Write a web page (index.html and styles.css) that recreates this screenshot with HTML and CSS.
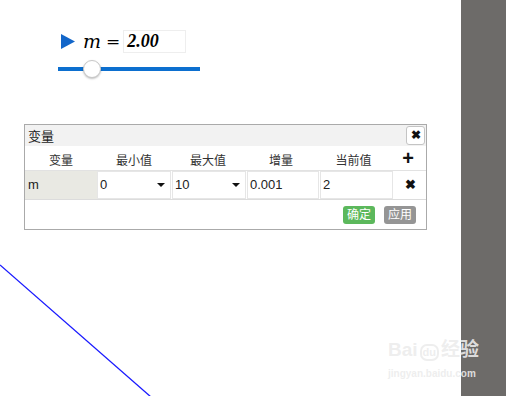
FILE: index.html
```html
<!DOCTYPE html>
<html lang="zh">
<head>
    <meta charset="UTF-8">
    <title>变量</title>
    <link rel="stylesheet" href="styles.css">
</head>
<body>
<div class="page">
    <div class="canvas">
        <svg class="graph" width="461" height="396" viewBox="0 0 461 396">
            <line x1="0" y1="265" x2="151" y2="397" stroke="#1a1aff" stroke-width="1.3"/>
        </svg>
        <div class="slider-box">
            <div class="slider-label">
                <svg class="play" width="14" height="15" viewBox="0 0 14 15"><polygon points="0,0 14,7.5 0,15" fill="#1266c9"/></svg>
                <span class="var-name">m</span>
                <span class="eq">=</span>
                <span class="val">2.00</span>
            </div>
            <div class="track">
                <div class="knob"></div>
            </div>
        </div>
        <div class="dialog">
            <div class="dlg-title">
                <span>变量</span>
                <button class="dlg-close">&#10006;</button>
            </div>
            <div class="row head">
                <div class="c1">变量</div>
                <div class="c2">最小值</div>
                <div class="c3">最大值</div>
                <div class="c4">增量</div>
                <div class="c5">当前值</div>
                <div class="c6 plus">+</div>
            </div>
            <div class="row body">
                <div class="c1 cell name">m</div>
                <div class="c2 cell sel">0<i class="caret"></i></div>
                <div class="c3 cell sel">10<i class="caret"></i></div>
                <div class="c4 cell">0.001</div>
                <div class="c5 cell">2</div>
                <div class="c6 del">&#10006;</div>
            </div>
            <div class="dlg-foot">
                <button class="btn ok">确定</button>
                <button class="btn apply">应用</button>
            </div>
        </div>
    </div>
    <div class="side"></div>
    <div class="wm">
        <div class="wm-top">Bai<span class="paw">du</span>经验</div>
        <div class="wm-bot">jingyan.baidu.com</div>
    </div>
</div>
</body>
</html>
```

FILE: styles.css
```css
body{
    margin:0;
    font-family:"Liberation Sans","Noto Sans CJK SC",sans-serif;
    background:white;
}
.page{
    position:relative;
    display:flex;
    width:506px;
    height:396px;
    overflow:hidden;
}
.canvas{
    position:relative;
    flex:1;
}
.side{
    width:45px;
    background:#6d6b69;
}
.graph{
    position:absolute;
    left:0;top:0;
}
.slider-box{
    position:absolute;
    left:58px;top:30px;
    width:142px;
}
.slider-label{
    display:flex;
    align-items:center;
    height:22px;
}
.play{
    margin-left:3px;
}
.var-name{
    font-family:"DejaVu Serif",serif;
    font-style:italic;
    font-size:19px;
    margin-left:8px;
    line-height:22px;
}
.eq{
    font-family:"DejaVu Serif",serif;
    font-size:17px;
    margin-left:5px;
    line-height:22px;
}
.val{
    margin-left:3px;
    width:58px;
    height:21px;
    border:1px solid #eeeeee;
    font-family:"Liberation Serif",serif;
    font-style:italic;
    font-weight:bold;
    font-size:18px;
    line-height:21px;
    padding-left:3px;
}
.track{
    position:relative;
    margin-top:15px;
    height:4px;
    background:#0c6fcf;
}
.knob{
    position:absolute;
    left:25px;top:-7px;
    width:16px;height:16px;
    border-radius:50%;
    background:white;
    border:1px solid #c8c8c8;
    box-shadow:0 1px 2px rgba(0,0,0,0.25);
}
.dialog{
    position:absolute;
    left:24px;top:124px;
    width:401px;
    height:104px;
    border:1px solid #aaaaaa;
    background:white;
    font-size:13px;
    color:#222;
}
.dlg-title{
    display:flex;
    align-items:center;
    justify-content:space-between;
    height:21px;
    background:#f2f2f2;
    padding-left:3px;
    font-size:13px;
}
.dlg-close{
    width:19px;height:19px;
    margin-right:1px;
    padding:0;
    border:1px solid #c4c4c4;
    border-radius:3px;
    background:white;
    font-size:12px;
    font-weight:bold;
    color:#111;
    line-height:17px;
}
.row{
    display:flex;
}
.row.head{
    height:24px;
    align-items:center;
    font-size:12px;
    color:#333;
}
.head > div{
    text-align:center;
    padding-top:3px;
}
.c1{width:72px;}
.c2{width:74px;}
.c3{width:74px;}
.c4{width:72px;}
.c5{width:73px;}
.c6{flex:1;text-align:center;}
.plus{
    font-size:20px;
    font-weight:bold;
    color:#111;
    padding-top:0 !important;
    line-height:20px;
}
.row.body{
    height:28px;
    border-top:1px solid #e2e2e2;
    border-bottom:1px solid #dcdcdc;
}
.cell{
    position:relative;
    box-sizing:border-box;
    border:1px solid #e6e6e6;
    margin-right:1px;
    padding-left:2px;
    line-height:25px;
    font-size:13px;
    color:#222;
}
.cell.name{
    background:#e9e9e3;
    margin-right:0;
    border-color:#e9e9e3;
}
.sel .caret{
    position:absolute;
    right:5px;top:11px;
    border-left:4px solid transparent;
    border-right:4px solid transparent;
    border-top:4px solid #111;
}
.del{
    font-size:13px;
    font-weight:bold;
    line-height:27px;
    color:#111;
}
.dlg-foot{
    display:flex;
    justify-content:flex-end;
    gap:9px;
    padding:6px 10px 0 0;
}
.btn{
    height:18px;
    padding:0 4px;
    border:none;
    border-radius:3px;
    color:white;
    font-size:12px;
    font-family:inherit;
    line-height:18px;
}
.ok{background:#5cb85c;}
.apply{background:#959595;}
.wm{
    position:absolute;
    left:388px;top:338px;
    white-space:nowrap;
    color:rgba(236,236,236,0.9);
    font-weight:bold;
}
.wm-top{
    font-size:19px;
    line-height:24px;
}
.paw{
    display:inline-block;
    font-size:11px;
    line-height:13px;
    border:2px solid rgba(236,236,236,0.9);
    border-radius:7px;
    padding:0 1px;
    margin:0 2px;
}
.wm-bot{
    font-size:10px;
    margin-top:6px;
}
```
